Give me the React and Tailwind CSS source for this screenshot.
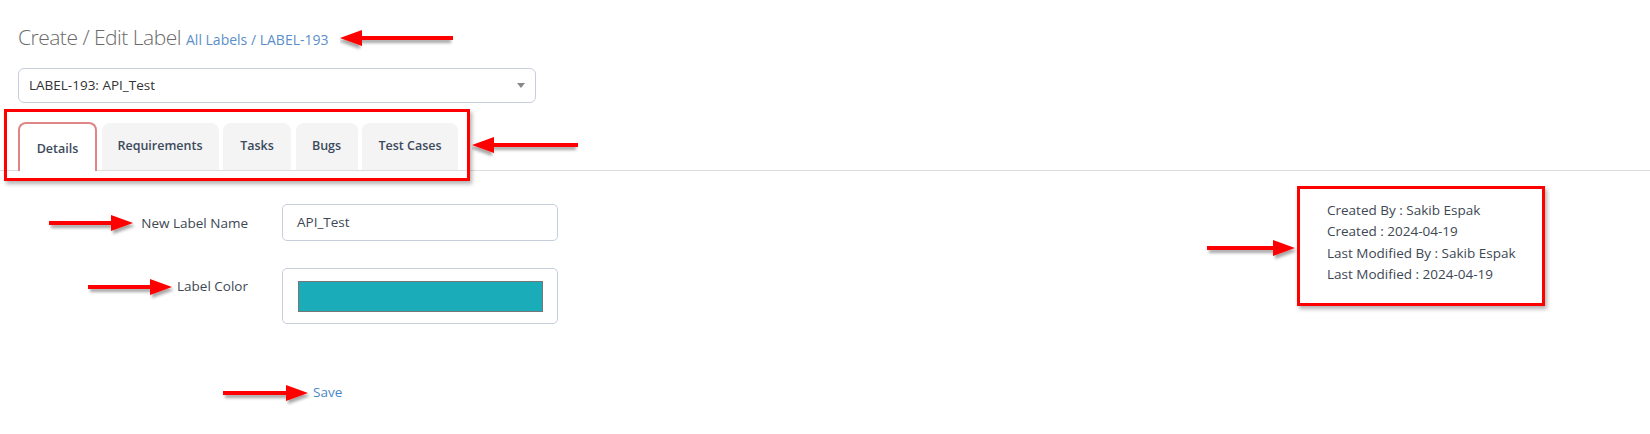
import React from "react";

// red annotation arrow, drawn with a soft shadow like the screenshot markup
const Arrow = ({ className, length, dir = "right" }) => {
  const head = 22;
  const flip = dir === "left" ? `translate(${length} 0) scale(-1 1)` : undefined;
  return (
    <svg
      className={`absolute ${className}`}
      width={length + 6}
      height={24}
      viewBox={`0 0 ${length + 6} 24`}
    >
      <defs>
        <filter id={`sh-${dir}`} x="-10%" y="-50%" width="130%" height="220%">
          <feDropShadow dx="2" dy="3" stdDeviation="1.5" floodColor="#000" floodOpacity="0.35" />
        </filter>
      </defs>
      <g transform={flip} filter={`url(#sh-${dir})`}>
        <rect x="0" y="8" width={length - head + 2} height="4" fill="#ff0000" />
        <polygon points={`${length - head},2 ${length},10 ${length - head},18`} fill="#ff0000" />
      </g>
    </svg>
  );
};

const tabs = [
  { name: "Details", w: "w-[79px]" },
  { name: "Requirements", w: "w-[117px]" },
  { name: "Tasks", w: "w-[68px]" },
  { name: "Bugs", w: "w-[62px]" },
  { name: "Test Cases", w: "w-[96px]" },
];

const App = () => {
  return (
    <div className="relative w-[1650px] h-[434px] overflow-hidden bg-white font-['Open_Sans',sans-serif] text-[#333]">
      <div className="pl-[18px]">
        <h1 className="flex items-baseline gap-[5px] pt-[23px] leading-[29px]">
          <span className="text-[21px] font-light tracking-[-0.5px] text-[#6b6b6b]">Create / Edit Label</span>
          <span className="text-[14px] text-[#5b8fc9]">All Labels / LABEL-193</span>
        </h1>

        <div className="mt-[14px] flex h-[35px] w-[518px] items-center justify-between rounded-[6px] border border-[#c8cfdc] pl-[10px] pr-[10px]">
          <span className="text-[13.5px] text-[#333]">LABEL-193: API_Test</span>
          <span className="h-0 w-0 border-x-[4px] border-t-[5px] border-x-transparent border-t-[#888]" />
        </div>
      </div>

      <div className="mt-[19px] flex items-end gap-[4.5px] border-b border-[#dedede] pl-[18px]">
        {tabs.map((t, i) =>
          i === 0 ? (
            <div
              key={t.name}
              className={`${t.w} -mb-px flex h-[49px] items-center justify-center rounded-t-[8px] border-2 border-b-0 border-[#e08585] bg-white pt-[4px] text-[12.5px] font-semibold text-[#3b4a5c]`}
            >
              {t.name}
            </div>
          ) : (
            <div
              key={t.name}
              className={`${t.w} flex h-[47px] items-center justify-center rounded-t-[8px] bg-[#f4f4f4] text-[12.5px] font-semibold text-[#3b4a5c]`}
            >
              {t.name}
            </div>
          )
        )}
      </div>

      <div className="flex pt-[15px]">
        <div className="pt-[18px]">
          <div className="flex">
            <div className="w-[248px] pt-[9px] text-right text-[13.5px] text-[#3d4753]">New Label Name</div>
            <div className="ml-[34px] flex h-[37px] w-[276px] items-center rounded-[5px] border border-[#c8cfdc] pl-[14px] text-[13.5px] text-[#3d4753]">
              API_Test
            </div>
          </div>
          <div className="mt-[27px] flex">
            <div className="w-[248px] pt-[8px] text-right text-[13.5px] text-[#3d4753]">Label Color</div>
            <div className="ml-[34px] h-[56px] w-[276px] rounded-[5px] border border-[#c8cfdc] pl-[15px] pt-[12px]">
              <div className="h-[31px] w-[245px] border border-[#777] bg-[#1aacb8]" />
            </div>
          </div>
          <div className="mt-[58px] pl-[313px] text-[13.5px] leading-[20px] text-[#4a87c6]">Save</div>
        </div>

        <div className="ml-auto mr-[105px] h-[120px] w-[248px] border-[3px] border-[#ff0000] pl-[27px] pt-[11px] text-[13.5px] leading-[21.3px] text-[#3d4753] shadow-[2px_3px_4px_rgba(0,0,0,0.3)]">
          <div>Created By : Sakib Espak</div>
          <div>Created : 2024-04-19</div>
          <div>Last Modified By : Sakib Espak</div>
          <div>Last Modified : 2024-04-19</div>
        </div>
      </div>

      {/* annotation markup */}
      <div className="absolute left-[4px] top-[109px] h-[72px] w-[466px] border-[3px] border-[#ff0000] shadow-[2px_3px_4px_rgba(0,0,0,0.3)]" />
      <Arrow className="left-[340px] top-[28px]" length={113} dir="left" />
      <Arrow className="left-[472px] top-[135px]" length={106} dir="left" />
      <Arrow className="left-[49px] top-[213px]" length={84} />
      <Arrow className="left-[88px] top-[277px]" length={84} />
      <Arrow className="left-[223px] top-[383px]" length={85} />
      <Arrow className="left-[1207px] top-[238px]" length={88} />
    </div>
  );
};

export default App;
